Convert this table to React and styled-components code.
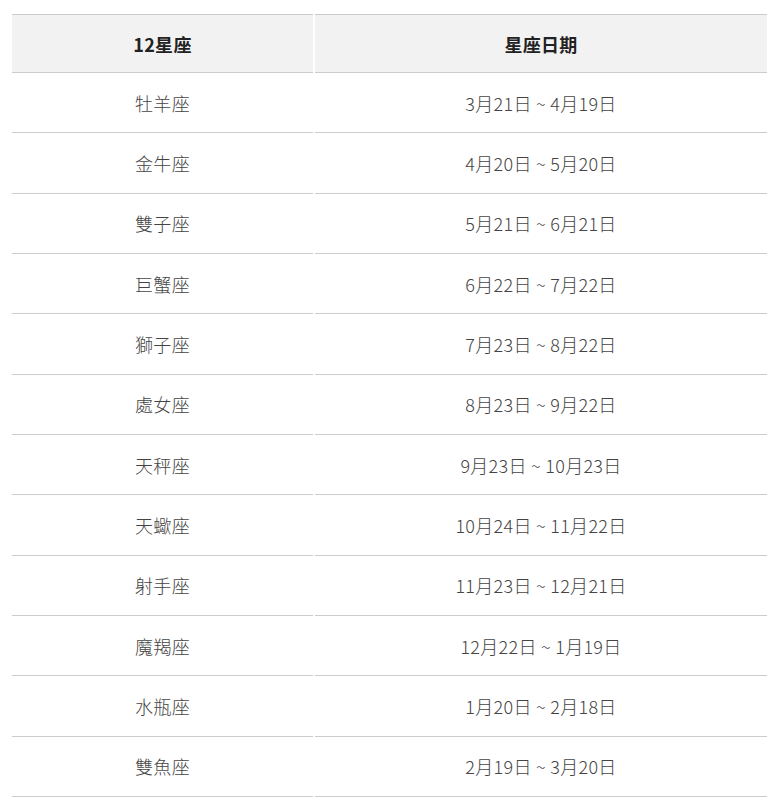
import React from 'react';
import styled, { createGlobalStyle } from 'styled-components';

const GlobalStyle = createGlobalStyle`
	body {
		margin: 0;
		background: #fff;
		font-family: 'Noto Sans CJK TC', 'Noto Sans', sans-serif;
	}
`;

const Wrapper = styled.div`
	padding: 14px 9px 0 10px;
`;

const Table = styled.table`
	width: 759px;
	border-collapse: separate;
	border-spacing: 2px 0;
	font-size: 18px;
	letter-spacing: 0.3px;
`;

const HeadCell = styled.th`
	width: ${props => props.width}px;
	height: 59px;
	padding: 0;
	box-sizing: border-box;
	background: #f2f2f2;
	border-top: 1px solid #cccccc;
	border-bottom: 1px solid #cccccc;
	color: #222;
	font-weight: 700;
	text-align: center;
	vertical-align: middle;
`;

const Cell = styled.td`
	height: 60.33px;
	padding: 0;
	box-sizing: border-box;
	border-bottom: 1px solid #cccccc;
	color: #444;
	font-weight: 300;
	text-align: center;
	vertical-align: middle;
`;

const signs = [
	['牡羊座', '3月21日 ~ 4月19日'],
	['金牛座', '4月20日 ~ 5月20日'],
	['雙子座', '5月21日 ~ 6月21日'],
	['巨蟹座', '6月22日 ~ 7月22日'],
	['獅子座', '7月23日 ~ 8月22日'],
	['處女座', '8月23日 ~ 9月22日'],
	['天秤座', '9月23日 ~ 10月23日'],
	['天蠍座', '10月24日 ~ 11月22日'],
	['射手座', '11月23日 ~ 12月21日'],
	['魔羯座', '12月22日 ~ 1月19日'],
	['水瓶座', '1月20日 ~ 2月18日'],
	['雙魚座', '2月19日 ~ 3月20日'],
];

const App = () => (
	<>
		<GlobalStyle />
		<Wrapper>
			<Table>
				<thead>
					<tr>
						<HeadCell width={301}>12星座</HeadCell>
						<HeadCell width={452}>星座日期</HeadCell>
					</tr>
				</thead>
				<tbody>
					{signs.map(([name, dates]) => (
						<tr key={name}>
							<Cell>{name}</Cell>
							<Cell>{dates}</Cell>
						</tr>
					))}
				</tbody>
			</Table>
		</Wrapper>
	</>
);

export default App;
